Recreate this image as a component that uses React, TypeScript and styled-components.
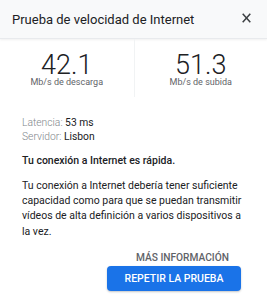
import React from "react";
import styled, { createGlobalStyle } from "styled-components";

const Global = createGlobalStyle`
  html, body { margin: 0; padding: 0; background: #ffffff; }
  body { font-family: Roboto, "Noto Sans", Arial, sans-serif; -webkit-font-smoothing: antialiased; }
`;

const Card = styled.div`
  width: 267px;
  height: 300px;
  display: flex;
  flex-direction: column;
  background: #ffffff;
  overflow: hidden;
`;

const Header = styled.div`
  height: 39px;
  flex: none;
  display: flex;
  align-items: center;
  justify-content: space-between;
  padding: 0 16px 0 12px;
  background: #f8f9fa;
  border-bottom: 1px solid #e8eaed;
  box-shadow: 0 1px 2px rgba(60, 64, 67, 0.08);
  box-sizing: border-box;
`;

const Title = styled.div`
  font-size: 13px;
  color: #202124;
`;

const Close = styled.button`
  border: 0;
  background: none;
  padding: 0;
  width: 9px;
  height: 10px;
  margin-bottom: 3px;
  display: flex;
  align-items: center;
  justify-content: center;
  color: #3c4043;
`;

const Stats = styled.div`
  display: grid;
  grid-template-columns: 1fr 1fr;
  height: 58px;
  flex: none;
`;

const Stat = styled.div<{ $divider?: boolean }>`
  display: flex;
  flex-direction: column;
  align-items: center;
  padding-top: 13.8px;
  box-sizing: border-box;
  border-left: ${(p) => (p.$divider ? "1px solid #f1f3f4" : "none")};
`;

const Value = styled.div`
  font-size: 27px;
  font-weight: 300;
  line-height: 24px;
  color: #202124;
`;

const Unit = styled.div`
  font-size: 9px;
  line-height: 11px;
  color: #5f6368;
`;

const Body = styled.div`
  display: flex;
  flex-direction: column;
  padding: 19px 16px 0 22px;
`;

const InfoLine = styled.div`
  font-size: 10.3px;
  line-height: 13.5px;
  color: #202124;
`;

const Label = styled.span`
  color: #80868b;
  font-weight: 300;
`;

const Verdict = styled.div`
  margin-top: 10.5px;
  font-size: 10.5px;
  line-height: 14px;
  font-weight: 500;
  color: #202124;
`;

const Paragraph = styled.p`
  margin: 10.3px 0 0 0;
  font-size: 10.5px;
  line-height: 15.3px;
  color: #202124;
`;

const Actions = styled.div`
  display: flex;
  flex-direction: column;
  align-items: flex-end;
  padding: 0 26px 0 0;
  margin-top: 12.5px;
`;

const LinkButton = styled.button`
  border: 0;
  background: none;
  padding: 0;
  margin-right: 12px;
  font-family: inherit;
  font-size: 10.2px;
  line-height: 14px;
  font-weight: 500;
  color: #5f6368;
  text-transform: uppercase;
`;

const PrimaryButton = styled.button`
  margin-top: 0.5px;
  width: 134px;
  height: 25px;
  border: 0;
  border-radius: 4px;
  background: #1a73e8;
  color: #ffffff;
  font-family: inherit;
  font-size: 10.5px;
  font-weight: 500;
  text-transform: uppercase;
  box-shadow: 0 1px 2px rgba(60, 64, 67, 0.3);
`;

export default function App() {
  return (
    <>
      <Global />
      <Card>
        <Header>
          <Title>Prueba de velocidad de Internet</Title>
          <Close aria-label="Cerrar">
            <svg width="9" height="10" viewBox="0 0 9 10">
              <path d="M0.7 0.7 L8.3 9.3 M8.3 0.7 L0.7 9.3" stroke="currentColor" strokeWidth="1.5" />
            </svg>
          </Close>
        </Header>
        <Stats>
          <Stat>
            <Value>42.1</Value>
            <Unit>Mb/s de descarga</Unit>
          </Stat>
          <Stat $divider>
            <Value>51.3</Value>
            <Unit>Mb/s de subida</Unit>
          </Stat>
        </Stats>
        <Body>
          <InfoLine>
            <Label>Latencia:</Label> 53 ms
          </InfoLine>
          <InfoLine>
            <Label>Servidor:</Label> Lisbon
          </InfoLine>
          <Verdict>Tu conexión a Internet es rápida.</Verdict>
          <Paragraph>
            Tu conexión a Internet debería tener suficiente capacidad como para que se puedan transmitir vídeos de alta definición a varios dispositivos a la vez.
          </Paragraph>
        </Body>
        <Actions>
          <LinkButton>Más información</LinkButton>
          <PrimaryButton>Repetir la prueba</PrimaryButton>
        </Actions>
      </Card>
    </>
  );
}
